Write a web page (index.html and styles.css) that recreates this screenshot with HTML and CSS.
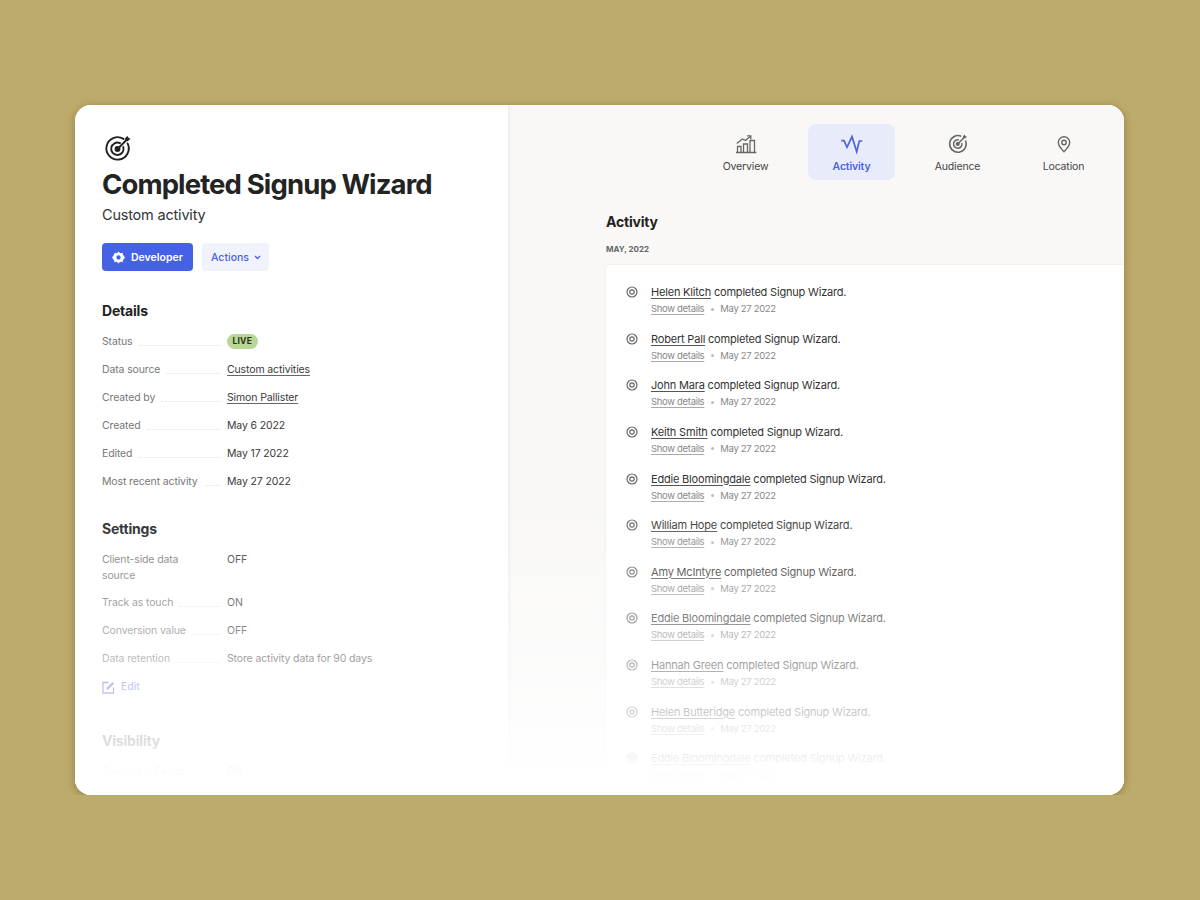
FILE: index.html
```html
<!DOCTYPE html>
<html lang="en">
<head>
  <meta charset="UTF-8">
  <meta name="viewport" content="width=device-width, initial-scale=1.0">
  <title>Completed Signup Wizard</title>
  <link rel="stylesheet" href="styles.css">
</head>
<body>
  <div class="window">
    <div class="side">
      <svg class="goal-icon" width="28" height="28" viewBox="0 0 28 28" fill="none" stroke="#222" stroke-width="1.9">
        <path d="M19.5 4.9A11.2 11.2 0 1 0 23.6 9.4" stroke-linecap="round"/>
        <path d="M16 9.2A6.2 6.2 0 1 0 19.3 13" stroke-linecap="round"/>
        <circle cx="13.5" cy="15" r="2" fill="#222"/>
        <path d="M13.5 15L24 4.5" stroke-linecap="round"/>
        <path d="M21 4.5L23.4 1.8L24.2 4.1L26.6 4.6L23.8 7.2L21.4 6.8Z" fill="#222" stroke="none"/>
      </svg>
      <h1>Completed Signup Wizard</h1>
      <p class="subtitle">Custom activity</p>
      <div class="buttons">
        <a class="btn btn-primary">
          <svg width="13" height="13" viewBox="0 0 24 24" fill="#fff"><path fill-rule="evenodd" d="M12 1l3 3.2 4.3-.9 1.3 4.2L24 12l-3.4 4.5-1.3 4.2-4.3-.9L12 23l-3-3.2-4.3.9-1.3-4.2L0 12l3.4-4.5 1.3-4.2 4.3.9zM12 8a4 4 0 1 0 0 8 4 4 0 0 0 0-8z"/></svg>
          Developer
        </a>
        <a class="btn btn-soft">
          Actions
          <svg width="7" height="5" viewBox="0 0 7 5" fill="none" stroke="#4a63e0" stroke-width="1.3"><path d="M1 1l2.5 2.5L6 1"/></svg>
        </a>
      </div>

      <h2>Details</h2>
      <dl class="rows">
        <div class="row"><dt><span>Status</span></dt><dd><span class="badge">LIVE</span></dd></div>
        <div class="row"><dt><span>Data source</span></dt><dd><a>Custom activities</a></dd></div>
        <div class="row"><dt><span>Created by</span></dt><dd><a>Simon Pallister</a></dd></div>
        <div class="row"><dt><span>Created</span></dt><dd>May 6 2022</dd></div>
        <div class="row"><dt><span>Edited</span></dt><dd>May 17 2022</dd></div>
        <div class="row"><dt><span>Most recent activity</span></dt><dd>May 27 2022</dd></div>
      </dl>

      <h2 class="settings">Settings</h2>
      <dl class="rows">
        <div class="row row-tall"><dt class="no-leader"><span>Client-side data source</span></dt><dd>OFF</dd></div>
        <div class="row"><dt><span>Track as touch</span></dt><dd>ON</dd></div>
        <div class="row"><dt><span>Conversion value</span></dt><dd>OFF</dd></div>
        <div class="row"><dt><span>Data retention</span></dt><dd>Store activity data for 90 days</dd></div>
      </dl>
      <a class="edit">
        <svg width="13" height="13" viewBox="0 0 13 13" fill="none" stroke="#4a63e0" stroke-width="1.3"><path d="M6.5 1.5H1v10.500h10.500V6.500"/><path d="M4.500 8.500V6.800L10.500 1l1.600 1.600L6.200 8.500z" fill="#4a63e0" stroke="none"/></svg>
        Edit
      </a>

      <h2 class="visibility">Visibility</h2>
      <dl class="rows">
        <div class="row"><dt class="no-leader"><span>Tracked in Feeds</span></dt><dd>ON</dd></div>
      </dl>
    </div>

    <div class="main">
      <nav class="tabs">
        <a class="tab">
          <svg width="24" height="24" viewBox="0 0 24 24" fill="none" stroke="#666" stroke-width="1.300"><path d="M2 20.500h20.300"/><path d="M3.500 20v-5.500h3.500V20M9.500 20v-8h4v8M16 20V8.500h4.500V20"/><path d="M2.700 11.500L8.500 7l3 1.500L16.500 4.200"/><path d="M13 3.800h3.800v3.500"/></svg>
          Overview
        </a>
        <a class="tab tab-active">
          <svg width="24" height="24" viewBox="0 0 24 24" fill="none" stroke="#4a63e0" stroke-width="1.700"><path d="M1.300 8.700H4L7 15.300 12 4.700 16.700 19.700 19.300 9H22.300"/></svg>
          Activity
        </a>
        <a class="tab">
          <svg width="24" height="24" viewBox="0 0 24 24" fill="none" stroke="#666" stroke-width="1.500"><path d="M15.200 4.300A8.300 8.300 0 1 0 19.500 8.500"/><path d="M12.800 8A4.200 4.200 0 1 0 15.800 11"/><circle cx="11.700" cy="12" r="1.300" fill="#666"/><path d="M11.700 12l7-7"/><path d="M16.700 4.500l2-2 .6 1.600 1.600.6-2 2z" fill="#666" stroke="none"/></svg>
          Audience
        </a>
        <a class="tab">
          <svg width="24" height="24" viewBox="0 0 24 24" fill="none" stroke="#666" stroke-width="1.400"><path d="M12 19.700c-3.300-3.300-5.700-6-5.700-9.200a5.700 5.700 0 0 1 11.400 0c0 3.200-2.400 5.900-5.700 9.200z"/><circle cx="12" cy="10.500" r="2.200"/></svg>
          Location
        </a>
      </nav>

      <h3>Activity</h3>
      <div class="month">MAY, 2022</div>
      <ul class="feed">
        <li><svg class="dot" width="12" height="12" viewBox="0 0 12 12" fill="none" stroke="#666" stroke-width="1.200"><circle cx="6" cy="6" r="5"/><circle cx="6" cy="6" r="2.200"/></svg><div><p><a>Helen Klitch</a> completed Signup Wizard.</p><small><a>Show details</a><i></i>May 27 2022</small></div></li>
        <li><svg class="dot" width="12" height="12" viewBox="0 0 12 12" fill="none" stroke="#666" stroke-width="1.200"><circle cx="6" cy="6" r="5"/><circle cx="6" cy="6" r="2.200"/></svg><div><p><a>Robert Pall</a> completed Signup Wizard.</p><small><a>Show details</a><i></i>May 27 2022</small></div></li>
        <li><svg class="dot" width="12" height="12" viewBox="0 0 12 12" fill="none" stroke="#666" stroke-width="1.200"><circle cx="6" cy="6" r="5"/><circle cx="6" cy="6" r="2.200"/></svg><div><p><a>John Mara</a> completed Signup Wizard.</p><small><a>Show details</a><i></i>May 27 2022</small></div></li>
        <li><svg class="dot" width="12" height="12" viewBox="0 0 12 12" fill="none" stroke="#666" stroke-width="1.200"><circle cx="6" cy="6" r="5"/><circle cx="6" cy="6" r="2.200"/></svg><div><p><a>Keith Smith</a> completed Signup Wizard.</p><small><a>Show details</a><i></i>May 27 2022</small></div></li>
        <li><svg class="dot" width="12" height="12" viewBox="0 0 12 12" fill="none" stroke="#666" stroke-width="1.200"><circle cx="6" cy="6" r="5"/><circle cx="6" cy="6" r="2.200"/></svg><div><p><a>Eddie Bloomingdale</a> completed Signup Wizard.</p><small><a>Show details</a><i></i>May 27 2022</small></div></li>
        <li><svg class="dot" width="12" height="12" viewBox="0 0 12 12" fill="none" stroke="#666" stroke-width="1.200"><circle cx="6" cy="6" r="5"/><circle cx="6" cy="6" r="2.200"/></svg><div><p><a>William Hope</a> completed Signup Wizard.</p><small><a>Show details</a><i></i>May 27 2022</small></div></li>
        <li><svg class="dot" width="12" height="12" viewBox="0 0 12 12" fill="none" stroke="#666" stroke-width="1.200"><circle cx="6" cy="6" r="5"/><circle cx="6" cy="6" r="2.200"/></svg><div><p><a>Amy McIntyre</a> completed Signup Wizard.</p><small><a>Show details</a><i></i>May 27 2022</small></div></li>
        <li><svg class="dot" width="12" height="12" viewBox="0 0 12 12" fill="none" stroke="#666" stroke-width="1.200"><circle cx="6" cy="6" r="5"/><circle cx="6" cy="6" r="2.200"/></svg><div><p><a>Eddie Bloomingdale</a> completed Signup Wizard.</p><small><a>Show details</a><i></i>May 27 2022</small></div></li>
        <li><svg class="dot" width="12" height="12" viewBox="0 0 12 12" fill="none" stroke="#666" stroke-width="1.200"><circle cx="6" cy="6" r="5"/><circle cx="6" cy="6" r="2.200"/></svg><div><p><a>Hannah Green</a> completed Signup Wizard.</p><small><a>Show details</a><i></i>May 27 2022</small></div></li>
        <li><svg class="dot" width="12" height="12" viewBox="0 0 12 12" fill="none" stroke="#666" stroke-width="1.200"><circle cx="6" cy="6" r="5"/><circle cx="6" cy="6" r="2.200"/></svg><div><p><a>Helen Butteridge</a> completed Signup Wizard.</p><small><a>Show details</a><i></i>May 27 2022</small></div></li>
        <li><svg class="dot" width="12" height="12" viewBox="0 0 12 12" fill="none" stroke="#666" stroke-width="1.200"><circle cx="6" cy="6" r="5"/><circle cx="6" cy="6" r="2.200"/></svg><div><p><a>Eddie Bloomingdale</a> completed Signup Wizard.</p><small><a>Show details</a><i></i>May 27 2022</small></div></li>
      </ul>
    </div>
    <div class="fade"></div>
  </div>
</body>
</html>
```
FILE: styles.css
```css
* {
  margin: 0;
  padding: 0;
  box-sizing: border-box;
}
body {
  background-color: #bdab6b;
  font-family: Inter, "Liberation Sans", sans-serif;
  color: #2a2a2a;
}
a {
  color: inherit;
}
ul {
  list-style: none;
}
.window {
  position: relative;
  display: flex;
  width: 1049px;
  height: 690px;
  margin: 105px 0 0 75px;
  background-color: #fff;
  border-radius: 16px;
  overflow: hidden;
  box-shadow: 0 2px 8px rgba(60, 50, 10, 0.35);
}
.side {
  width: 433px;
  flex-shrink: 0;
  padding: 29px 0 0 27px;
  background-color: #fff;
  box-shadow: 1px 0 4px rgba(0, 0, 0, 0.07);
  position: relative;
}
.goal-icon {
  display: block;
  margin-left: 1.500px;
}
h1 {
  margin-top: 4px;
  font-size: 27.500px;
  line-height: 36px;
  font-weight: 700;
  letter-spacing: -0.880px;
  color: #232323;
  white-space: nowrap;
}
.subtitle {
  margin-top: 2px;
  font-size: 14.500px;
  line-height: 22px;
  letter-spacing: -0.200px;
  color: #333;
}
.buttons {
  display: flex;
  gap: 9px;
  margin-top: 17px;
}
.btn {
  display: flex;
  align-items: center;
  height: 28px;
  border-radius: 4px;
  font-size: 10.500px;
}
.btn-primary {
  gap: 6px;
  width: 91px;
  padding-left: 10px;
  background-color: #4561e6;
  color: #fff;
  font-weight: 600;
}
.btn-soft {
  gap: 5px;
  width: 67px;
  padding-left: 9px;
  background-color: #f1f3fc;
  color: #4a63e0;
  font-weight: 500;
}
h2 {
  margin-top: 30px;
  font-size: 14px;
  line-height: 20px;
  font-weight: 700;
  letter-spacing: -0.200px;
  color: #222;
}
.settings {
  margin-top: 24px;
}
.rows {
  margin-top: 6px;
}
.row {
  display: flex;
  align-items: center;
  height: 28px;
  font-size: 10.500px;
  letter-spacing: -0.130px;
}
.row-tall {
  align-items: flex-start;
  height: 43px;
  padding-top: 7px;
  line-height: 16px;
}
dt {
  display: flex;
  align-items: flex-end;
  width: 125px;
  padding-right: 6px;
  color: #777;
}
dt span {
  flex-shrink: 0;
  max-width: 100px;
}
.row dt span {
  max-width: 105px;
}
dt::after {
  content: "";
  flex: 1;
  margin: 0 0 2px 6px;
  border-bottom: 1px dotted #e2e2e2;
}
dt.no-leader::after {
  display: none;
}
dd {
  color: #3a3a3a;
  white-space: nowrap;
}
dd a {
  text-decoration: underline;
  text-decoration-color: #666;
  text-underline-offset: 1.500px;
}
.badge {
  display: inline-block;
  padding: 0 5.500px;
  border-radius: 8px;
  background-color: #b9d794;
  color: #24331a;
  font-size: 8.500px;
  font-weight: 700;
  line-height: 15px;
  letter-spacing: 0.200px;
}
.edit {
  display: flex;
  align-items: center;
  gap: 6px;
  margin-top: 8px;
  font-size: 10.500px;
  line-height: 14px;
  color: #4a63e0;
}
.visibility {
  margin-top: 37px;
}
.main {
  flex: 1;
  padding: 19px 0 0 98px;
  background-color: #f9f8f7;
}
.tabs {
  display: flex;
  justify-content: flex-end;
  gap: 19px;
  padding-right: 17px;
}
.tab {
  display: flex;
  flex-direction: column;
  align-items: center;
  width: 87px;
  height: 56px;
  padding-top: 8px;
  border-radius: 8px;
  font-size: 10.500px;
  line-height: 14px;
  letter-spacing: -0.150px;
  color: #444;
  gap: 4px;
}
.tab-active {
  background-color: #e8ebf9;
  color: #4a63e0;
  font-weight: 600;
}
h3 {
  margin-top: 32px;
  font-size: 14px;
  line-height: 20px;
  font-weight: 700;
  letter-spacing: -0.200px;
  color: #222;
}
.month {
  margin-top: 11px;
  font-size: 8px;
  line-height: 12px;
  font-weight: 700;
  color: #666;
}
.feed {
  margin-top: 10px;
  padding: 19px 0 0 20px;
  background-color: #fff;
  border-radius: 4px 0 0 0;
  box-shadow: 0 0 3px rgba(0, 0, 0, 0.08);
  height: 600px;
}
.feed li {
  display: flex;
  height: 46.630px;
}
.dot {
  margin: 2px 13px 0 0;
  flex-shrink: 0;
}
.feed p {
  font-size: 11px;
  line-height: 16px;
  letter-spacing: -0.190px;
  color: #333;
}
.feed p a {
  text-decoration: underline;
  text-decoration-color: #555;
  text-underline-offset: 1.500px;
}
.feed small {
  display: flex;
  align-items: center;
  margin-top: 2px;
  font-size: 9.500px;
  line-height: 14px;
  letter-spacing: -0.320px;
  color: #888;
}
.feed small a {
  text-decoration: underline;
  text-decoration-color: #aaa;
  text-underline-offset: 1.500px;
}
.feed small i {
  width: 3px;
  height: 3px;
  margin: 0 6.500px;
  border-radius: 50%;
  background-color: #bbb;
}
.fade {
  position: absolute;
  left: 0;
  right: 0;
  bottom: 0;
  height: 300px;
  background: linear-gradient(to bottom, rgba(255, 255, 255, 0) 0%, rgba(255, 255, 255, 0.45) 50%, rgba(255, 255, 255, 0.97) 92%, #fff 100%);
  pointer-events: none;
}
```
